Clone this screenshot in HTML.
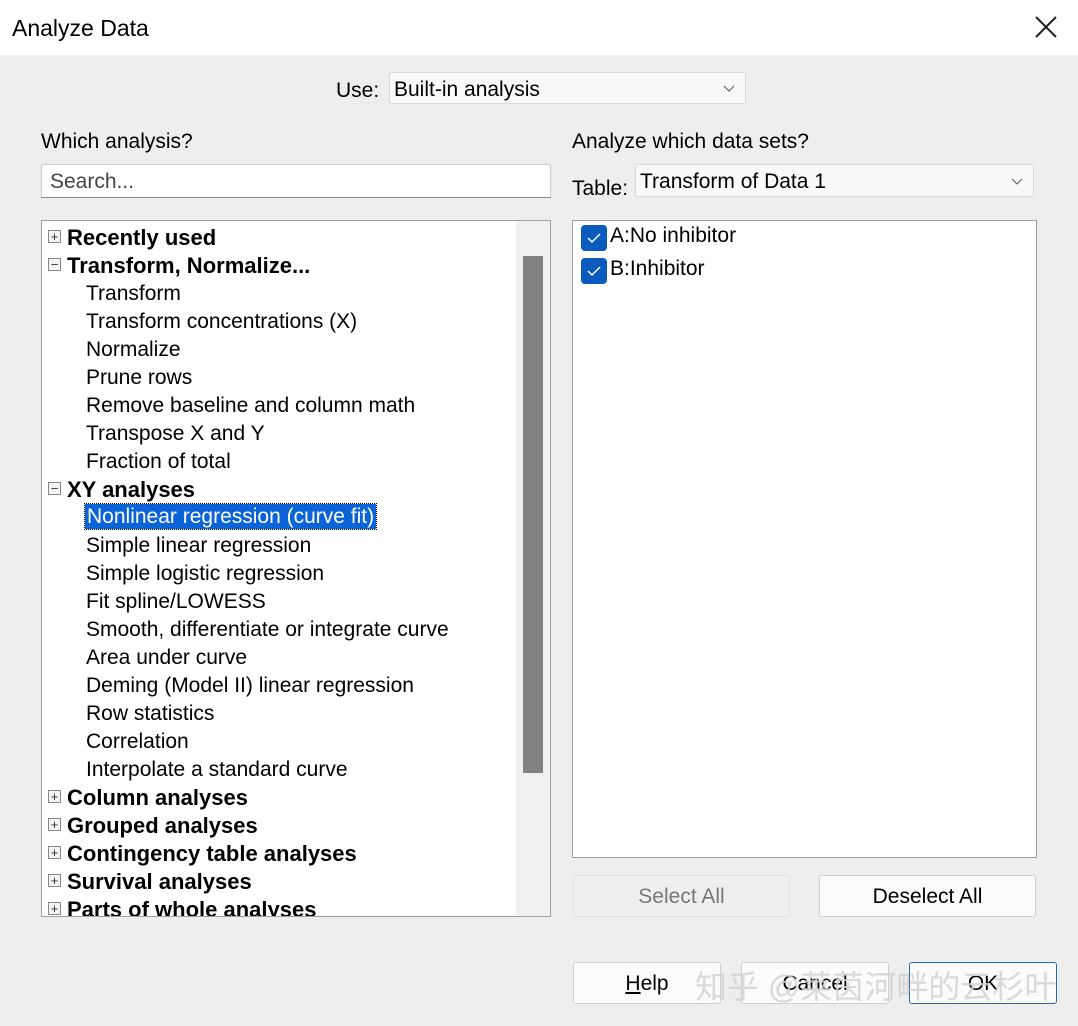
<!DOCTYPE html>
<html><head><meta charset="utf-8"><style>
body{margin:0;width:1078px;height:1026px;background:#eeeeee;font-family:"Liberation Sans","Noto Sans CJK SC",sans-serif;color:#000;position:relative;overflow:hidden;font-size:21px}
.a{position:absolute;white-space:nowrap}
.title{left:0;top:0;width:1078px;height:55px;background:#fff}
.box{background:#fff;border:1px solid #a0a0a0;box-sizing:border-box}
.combo{background:#f9f9f9;border:1px solid #d9d9d9;box-sizing:border-box;border-radius:2px}
.tree div{position:absolute;height:28px;line-height:29px}
.pm{position:absolute;width:13px;height:13px;border:1px solid #888;background:#f4f4f4;box-sizing:border-box;font-size:13px;line-height:11px;text-align:center;color:#333}
.b{font-weight:bold;font-size:22px}
.btn{background:#fbfbfb;border:1px solid #cfcfcf;border-radius:3px;box-sizing:border-box;text-align:center;line-height:42px}
.cb{position:absolute;width:26px;height:26px;background:#0a5bbd;border-radius:4px}
</style></head><body>
<div class="a title"></div>
<div class="a" style="left:12px;top:15px;font-size:23px">Analyze Data</div>
<svg class="a" style="left:1034px;top:15px" width="24" height="24"><path d="M2 2L22 22M22 2L2 22" stroke="#222" stroke-width="2"/></svg>

<div class="a" style="left:336px;top:79px">Use:</div>
<div class="a combo" style="left:389px;top:72px;width:357px;height:32px"><span class="a" style="left:4px;top:5px">Built-in analysis</span>
<svg class="a" style="left:333px;top:10px" width="12" height="10"><path d="M1 3L6 8L11 3" stroke="#555" fill="none"/></svg></div>

<div class="a" style="left:41px;top:130px">Which analysis?</div>
<div class="a box" style="left:41px;top:164px;width:510px;height:34px;border-color:#ccc;border-bottom-color:#888"><span class="a" style="left:8px;top:5px;color:#444">Search...</span></div>

<div class="a" style="left:572px;top:130px">Analyze which data sets?</div>
<div class="a" style="left:572px;top:177px">Table:</div>
<div class="a combo" style="left:635px;top:164px;width:399px;height:33px"><span class="a" style="left:4px;top:5px">Transform of Data 1</span>
<svg class="a" style="left:375px;top:11px" width="12" height="10"><path d="M1 3L6 8L11 3" stroke="#555" fill="none"/></svg></div>

<div class="a box tree" style="left:41px;top:220px;width:510px;height:697px;overflow:hidden">
<div class="a" style="left:474px;top:0;width:34px;height:697px;background:#f0f0f0"></div>
<div class="a" style="left:481px;top:35px;width:20px;height:517px;background:#828282"></div>
<span class="pm" style="left:6px;top:9px">+</span><div class="b" style="left:25px;top:2px">Recently used</div>
<span class="pm" style="left:6px;top:37px">−</span><div class="b" style="left:25px;top:30px">Transform, Normalize...</div>
<div style="left:44px;top:58px">Transform</div>
<div style="left:44px;top:86px">Transform concentrations (X)</div>
<div style="left:44px;top:114px">Normalize</div>
<div style="left:44px;top:142px">Prune rows</div>
<div style="left:44px;top:170px">Remove baseline and column math</div>
<div style="left:44px;top:198px">Transpose X and Y</div>
<div style="left:44px;top:226px">Fraction of total</div>
<span class="pm" style="left:6px;top:261px">−</span><div class="b" style="left:25px;top:254px">XY analyses</div>
<div style="left:43px;top:283px;height:25px;line-height:25px;background:#0a64d8;color:#fff;padding:0 2px;outline:1px dotted #000">Nonlinear regression (curve fit)</div>
<div style="left:44px;top:310px">Simple linear regression</div>
<div style="left:44px;top:338px">Simple logistic regression</div>
<div style="left:44px;top:366px">Fit spline/LOWESS</div>
<div style="left:44px;top:394px">Smooth, differentiate or integrate curve</div>
<div style="left:44px;top:422px">Area under curve</div>
<div style="left:44px;top:450px">Deming (Model II) linear regression</div>
<div style="left:44px;top:478px">Row statistics</div>
<div style="left:44px;top:506px">Correlation</div>
<div style="left:44px;top:534px">Interpolate a standard curve</div>
<span class="pm" style="left:6px;top:569px">+</span><div class="b" style="left:25px;top:562px">Column analyses</div>
<span class="pm" style="left:6px;top:597px">+</span><div class="b" style="left:25px;top:590px">Grouped analyses</div>
<span class="pm" style="left:6px;top:625px">+</span><div class="b" style="left:25px;top:618px">Contingency table analyses</div>
<span class="pm" style="left:6px;top:653px">+</span><div class="b" style="left:25px;top:646px">Survival analyses</div>
<span class="pm" style="left:6px;top:681px">+</span><div class="b" style="left:25px;top:674px">Parts of whole analyses</div>
</div>

<div class="a box" style="left:572px;top:220px;width:465px;height:638px">
<span class="cb" style="left:8px;top:4px"></span><svg class="a" style="left:13px;top:10px" width="16" height="14"><path d="M2 7L6 11L14 3" stroke="#fff" stroke-width="1.5" fill="none"/></svg>
<div class="a" style="left:37px;top:3px">A:No inhibitor</div>
<span class="cb" style="left:8px;top:37px"></span><svg class="a" style="left:13px;top:43px" width="16" height="14"><path d="M2 7L6 11L14 3" stroke="#fff" stroke-width="1.5" fill="none"/></svg>
<div class="a" style="left:37px;top:36px">B:Inhibitor</div>
</div>

<div class="a btn" style="left:573px;top:875px;width:217px;height:42px;color:#777;background:#efefef;border-color:#e0e0e0">Select All</div>
<div class="a btn" style="left:819px;top:875px;width:217px;height:42px">Deselect All</div>
<div class="a btn" style="left:573px;top:962px;width:148px;height:42px"><u>H</u>elp</div>
<div class="a btn" style="left:741px;top:962px;width:148px;height:42px">Cancel</div>
<div class="a btn" style="left:909px;top:962px;width:148px;height:42px;border:1px solid #2b6aa8">OK</div>
<div class="a" style="left:695px;top:962px;font-size:32px;color:rgba(210,210,210,0.85)">知乎 @莱茵河畔的云杉叶</div>
</body></html>
